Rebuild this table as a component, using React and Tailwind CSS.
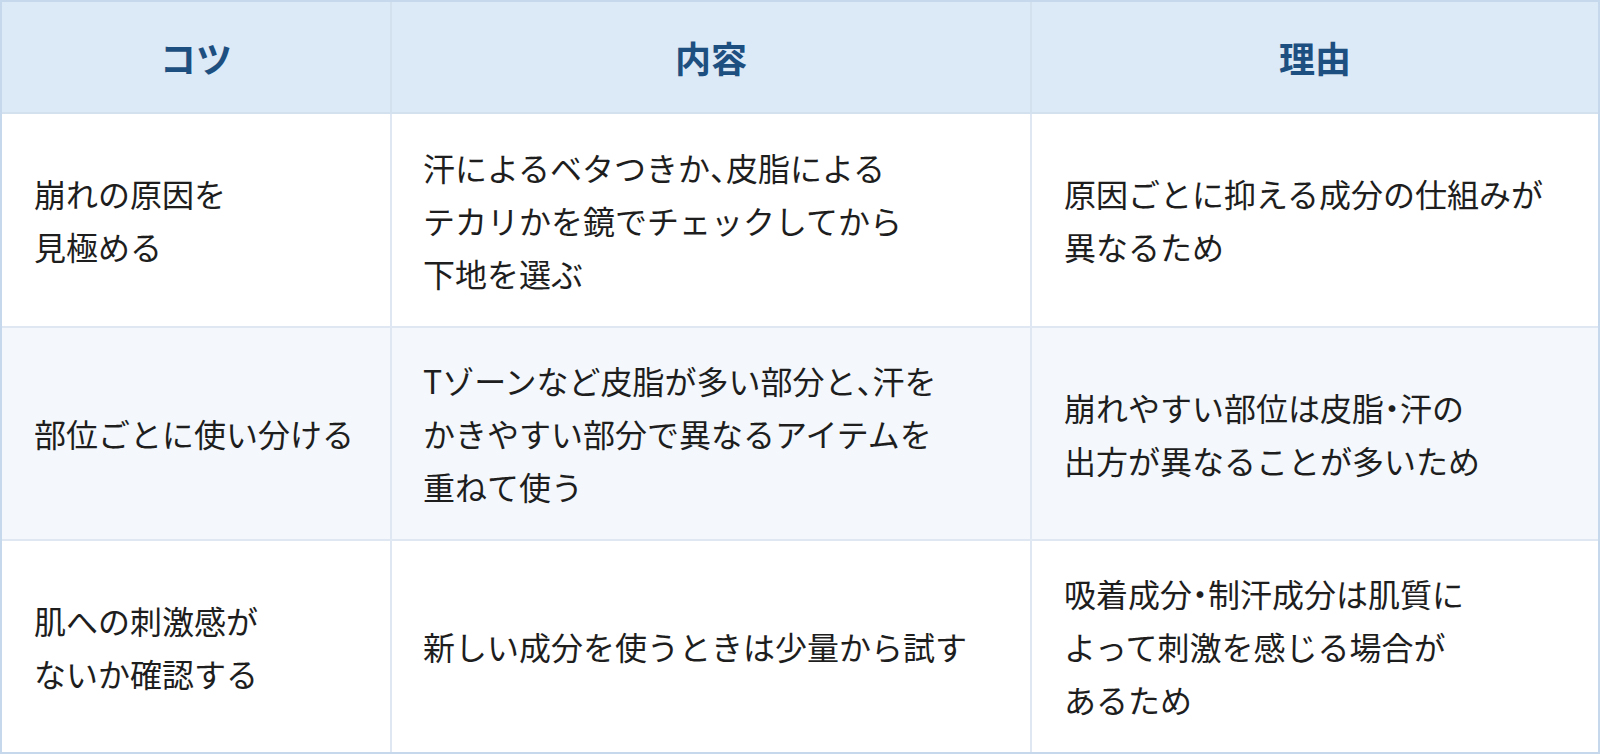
import React from 'react';

const rows = [
    {
        tip: ['崩れの原因を', '見極める'],
        detail: ['汗によるベタつきか、皮脂による', 'テカリかを鏡でチェックしてから', '下地を選ぶ'],
        reason: ['原因ごとに抑える成分の仕組みが', '異なるため'],
        bg: 'bg-white',
    },
    {
        tip: ['部位ごとに使い分ける'],
        detail: ['Tゾーンなど皮脂が多い部分と、汗を', 'かきやすい部分で異なるアイテムを', '重ねて使う'],
        reason: ['崩れやすい部位は皮脂・汗の', '出方が異なることが多いため'],
        bg: 'bg-[#f4f8fc]',
    },
    {
        tip: ['肌への刺激感が', 'ないか確認する'],
        detail: ['新しい成分を使うときは少量から試す'],
        reason: ['吸着成分・制汗成分は肌質に', 'よって刺激を感じる場合が', 'あるため'],
        bg: 'bg-white',
    },
];

// 句読点は半角幅に詰める
const Line = ({ text }) =>
    text.split(/([、・])/).map((part, i) =>
        part === '、' || part === '・' ? (
            <span key={i} className="[font-feature-settings:'halt']">{part}</span>
        ) : (
            part
        )
    );

// 改行は元の表と同じ位置で入れる
const Lines = ({ lines }) =>
    lines.map((line, i) => (
        <React.Fragment key={i}>
            <Line text={line} />
            {i < lines.length - 1 && <br />}
        </React.Fragment>
    ));

const App = () => {
    return (
        <div className="w-[1600px] h-[754px] bg-white font-['Noto_Sans_CJK_JP','Noto_Sans',sans-serif]">
            <div className="h-full border-2 border-[#c6d9ec] grid grid-cols-[390px_640px_1fr] grid-rows-[112px_214px_213px_1fr]">
                {/* ヘッダー */}
                {['コツ', '内容', '理由'].map((label, i) => (
                    <div
                        key={label}
                        className={`flex items-center justify-center bg-[#dce9f6] border-b-2 border-[#d3e1ef] ${i < 2 ? 'border-r-2' : ''}`}
                    >
                        <span className="text-[36px] font-bold text-[#1d4f80] leading-none">{label}</span>
                    </div>
                ))}

                {rows.map((row, r) => (
                    <React.Fragment key={r}>
                        <div className={`flex items-center pl-[32px] pr-4 ${row.bg} border-r-2 border-[#dfe8f2] ${r < 2 ? 'border-b-2' : ''}`}>
                            <p className="text-[32px] leading-[53px] text-[#1e1e1e]">
                                <Lines lines={row.tip} />
                            </p>
                        </div>
                        <div className={`flex items-center pl-[31px] pr-4 ${row.bg} border-r-2 border-[#dfe8f2] ${r < 2 ? 'border-b-2' : ''}`}>
                            <p className="text-[32px] leading-[53px] text-[#1e1e1e]">
                                <Lines lines={row.detail} />
                            </p>
                        </div>
                        <div className={`flex items-center pl-[32px] pr-4 ${row.bg} border-[#dfe8f2] ${r < 2 ? 'border-b-2' : ''}`}>
                            <p className="text-[32px] leading-[53px] text-[#1e1e1e]">
                                <Lines lines={row.reason} />
                            </p>
                        </div>
                    </React.Fragment>
                ))}
            </div>
        </div>
    );
};

export default App;
